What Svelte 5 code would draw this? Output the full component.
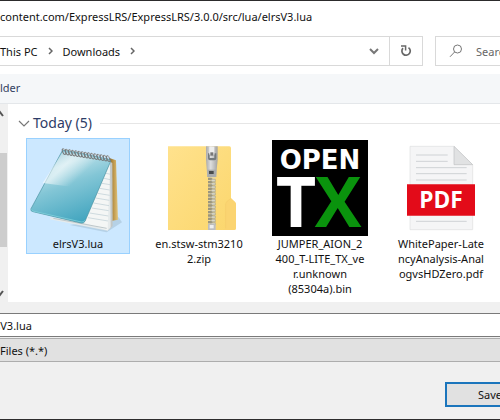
<script lang="ts">
  interface FileItem {
    icon: 'notepad' | 'zip' | 'opentx' | 'pdf';
    lines: string[];
  }

  const files: FileItem[] = [
    { icon: 'notepad', lines: ['elrsV3.lua'] },
    { icon: 'zip', lines: ['en.stsw-stm3210', '2.zip'] },
    { icon: 'opentx', lines: ['JUMPER_AION_2', '400_T-LITE_TX_ve', 'r.unknown', '(85304a).bin'] },
    { icon: 'pdf', lines: ['WhitePaper-Late', 'ncyAnalysis-Anal', 'ogvsHDZero.pdf'] }
  ];

  const rings = Array.from({ length: 15 }, (_, i) => i);
  const teeth = Array.from({ length: 14 }, (_, i) => i);

  let selected = $state(0);
  let fileName = $state('sV3.lua');
</script>

<div class="dialog">
  <header class="title">content.com/ExpressLRS/ExpressLRS/3.0.0/src/lua/elrsV3.lua</header>

  <div class="location">
    <nav class="address">
      <button class="crumb">This PC</button>
      <svg width="5" height="8" viewBox="0 0 5 8"><path d="M1 1l3 3-3 3" fill="none" stroke="#666" stroke-width="1.5" /></svg>
      <button class="crumb">Downloads</button>
      <svg width="5" height="8" viewBox="0 0 5 8"><path d="M1 1l3 3-3 3" fill="none" stroke="#666" stroke-width="1.5" /></svg>
      <button class="history" aria-label="Previous locations">
        <svg width="10" height="7" viewBox="0 0 10 7"><path d="M1 1l4 4 4-4" fill="none" stroke="#777" stroke-width="2" /></svg>
      </button>
      <button class="refresh" aria-label="Refresh">
        <svg width="12" height="12" viewBox="0 0 12 12">
          <path d="M8.500 2.600A4.200 4.200 0 1 1 3 3.200" fill="none" stroke="#686868" stroke-width="1.7" />
          <path d="M1 1h4.600v4.600" fill="none" stroke="#686868" stroke-width="1.5" />
        </svg>
      </button>
    </nav>
    <label class="search">
      <svg width="14" height="14" viewBox="0 0 14 14" fill="none" stroke="#777">
        <circle cx="8.5" cy="5" r="4" />
        <path d="M5.700 7.900L1 12.800" />
      </svg>
      <input type="search" placeholder="Search" aria-label="Search" />
    </label>
  </div>

  <div class="toolbar"><button>lder</button></div>

  <div class="browser">
    <div class="scrollbar">
      <svg width="4" height="7" viewBox="0 0 4 7"><path d="M-4 6l3.500-4.500L3 6" fill="none" stroke="#555" stroke-width="2" /></svg>
      <div class="thumb"></div>
      <svg width="4" height="7" viewBox="0 0 4 7"><path d="M-4 1l3.500 4.500L3 1" fill="none" stroke="#555" stroke-width="2" /></svg>
    </div>

    <main class="pane">
      <h2>
        <svg width="12" height="7" viewBox="0 0 12 7"><path d="M1 1l5 5 5-5" fill="none" stroke="#777" stroke-width="1.2" /></svg>
        Today (5)
      </h2>

      <div class="files">
        {#each files as file, i}
          <button class="file" class:selected={selected === i} onclick={() => (selected = i)}>
            {#if file.icon === 'notepad'}
              <svg class="icon" viewBox="30 30 288 288">
                <defs>
                  <linearGradient id="cover" x1="0.2" y1="0" x2="0.6" y2="1">
                    <stop offset="0" stop-color="#6fb5ca" />
                    <stop offset="0.25" stop-color="#b4dde7" />
                    <stop offset="0.5" stop-color="#83c6d6" />
                    <stop offset="1" stop-color="#42a5bf" />
                  </linearGradient>
                  <linearGradient id="shine" x1="0" y1="0" x2="1" y2="0.6">
                    <stop offset="0" stop-color="#fff" stop-opacity="0.1" />
                    <stop offset="0.4" stop-color="#fff" stop-opacity="0.6" />
                    <stop offset="0.7" stop-color="#fff" stop-opacity="0" />
                  </linearGradient>
                  <linearGradient id="spine">
                    <stop offset="0" stop-color="#8c6b2d" />
                    <stop offset="0.5" stop-color="#bd974b" />
                    <stop offset="1" stop-color="#e2c57d" />
                  </linearGradient>
                </defs>
                <path d="M150 285l110 22 46-30-10-15z" fill="#829cac" opacity="0.3" />
                <path d="M268 84l20 7 6 178-25 5z" fill="url(#spine)" />
                <path d="M266 92l11 7 1 189-12 12-14-25z" fill="#c2c7c6" />
                <path d="M270 95l-74 180-104-13-3 6 174 34 9-10z" fill="#e5eaeb" />
                <path d="M270 98l-7 203-71-22z" fill="#f4f6f5" />
                <path d="M258 130l14 3m-20 12l19 4m-25 11l24 4m-31 11l30 5m-36 10l36 6m-42 8l41 7m-47 8l46 8m-52 7l51 8m-57 7l56 9m-61 5l60 10" fill="none" stroke="#bacbd3" stroke-width="2" />
                <path d="M100 265l160 30" stroke="#bec7ca" stroke-width="3" />
                <path d="M126 64q2-5 8-4l133 28q6 2 4 8l-76 178q-4 7-12 5L39 245q-9-2-6-9z" fill="url(#cover)" stroke="#468f9f" stroke-width="2" />
                <path d="M128 66l138 25-38 89L68 159z" fill="url(#shine)" />
                <path d="M34 238q1 5 8 6l142 32q7 1 10-5" fill="none" stroke="#8bd9e2" stroke-width="2" />
                {#each rings as n}
                  <g transform="translate({132 + n * 9.5} {65 + n * 1.5})" fill="none">
                    <ellipse rx="4" ry="9" transform="rotate(-25)" stroke="#75797b" stroke-width="3" />
                    <path d="M-3-6q5-5 6 2" stroke="#d3d5d2" stroke-width="2" />
                  </g>
                {/each}
              </svg>
            {:else if file.icon === 'zip'}
              <svg class="icon" viewBox="3 15 288 288">
                <defs>
                  <linearGradient id="folder" x1="0" y1="0" x2="1" y2="1">
                    <stop offset="0" stop-color="#ffe28d" />
                    <stop offset="1" stop-color="#fbd66c" />
                  </linearGradient>
                  <linearGradient id="metal">
                    <stop offset="0" stop-color="#aaa" />
                    <stop offset="0.4" stop-color="#dedede" />
                    <stop offset="1" stop-color="#a2a2a2" />
                  </linearGradient>
                </defs>
                <path d="M54 34h184q5 0 5 5v151l12 11q3 3 3 8v70q0 6-6 6H54z" fill="url(#folder)" />
                <path d="M243 190l-12 8q-5 5-5 11v70q0 6-6 6h32q6 0 6-6v-70q0-5-3-8z" fill="#fbd471" />
                <path d="M227 280v-72q0-5 5-10l11-8" fill="none" stroke="#efc663" />
                <path d="M176 120h20v165h-20z" fill="#e8d7a0" />
                {#each teeth as n}
                  <g transform="translate(174 {128 + n * 10})">
                    <path d="M0 0h10l4 4-4 3H0z" fill="#9a957f" />
                    <path d="M22 5H12l-4 4 4 3h10z" fill="#d9d7c8" stroke="#777465" stroke-width="1" />
                  </g>
                {/each}
                <path d="M168 34h35v40l-5 52h-26l-4-52z" fill="url(#metal)" />
                <path d="M174 55h5v14h14V55h6v15q0 6-6 6h-13q-6 0-6-6z" fill="#747a7d" />
                <path d="M178 35h15v24h-15z" fill="#eee" />
                <path d="M181 52h9v10h-9z" fill="#777" />
                <path d="M172 104h27v22h-27z" fill="#a9acad" />
                <path d="M177 108h14v9h-14z" fill="#484b4c" />
                <path d="M174 266h23v19h-23z" fill="#bdbdbd" />
                <path d="M179 270h12v10h-12z" fill="#eee" />
              </svg>
            {:else if file.icon === 'opentx'}
              <svg class="icon" viewBox="0 0 96 96">
                <rect width="96" height="96" fill="#000" />
                <text class="open" x="48" y="29" text-anchor="middle">OPEN</text>
                <text class="tx" x="24" y="87" text-anchor="middle">T</text>
                <text class="tx green" x="66" y="87" text-anchor="middle">X</text>
              </svg>
            {:else}
              <svg class="icon" viewBox="24 15 288 288">
                <path d="M75 34h132l56 55v195H75z" fill="#f5f5f6" stroke="#dedfe0" stroke-width="2" />
                <path d="M207 34v55h56z" fill="#e1e2e3" stroke="#bfc1c2" stroke-width="2" />
                <path d="M93 60h95M93 79h95M93 98h152M93 116h152M93 135h152M93 259h152" stroke="#cfd2d5" stroke-width="3" />
                <path d="M66 148h204v94H66z" fill="#e30b19" />
                <text class="pdf" x="168" y="220" text-anchor="middle">PDF</text>
              </svg>
            {/if}
            {#each file.lines as line}
              <span>{line}</span>
            {/each}
          </button>
        {/each}
      </div>
    </main>
  </div>

  <div class="fields">
    <input type="text" aria-label="File name" bind:value={fileName} />
    <select aria-label="Save as type">
      <option>Files (*.*)</option>
    </select>
  </div>

  <footer><button>Save</button></footer>
</div>

<style>
  :global(body) {
    margin: 0;
    overflow: hidden;
  }

  .dialog {
    display: flex;
    flex-direction: column;
    box-sizing: border-box;
    min-height: 100vh;
    overflow: hidden;
    border-top: 1px solid #2c2b2c;
    border-bottom: 1px solid #2c2b2c;
    background: #f0f0f0;
    color: #111;
    font-family: 'Noto Sans', 'Open Sans', sans-serif;
    font-size: 11px;
    line-height: 15px;
  }

  svg {
    flex-shrink: 0;
  }

  button,
  input,
  select {
    box-sizing: border-box;
    margin: 0;
    padding: 0;
    border: 0;
    border-radius: 0;
    outline: none;
    background: none;
    color: inherit;
    font: inherit;
  }

  .title {
    padding: 8px 0 12px;
    background: #fff;
    white-space: nowrap;
  }

  .location {
    display: flex;
    gap: 12px;
    padding-bottom: 8px;
    background: #fff;
  }

  .address {
    display: flex;
    flex: 1;
    align-items: center;
    gap: 10px;
    height: 30px;
    box-sizing: border-box;
    border: 1px solid #d9d9d9;
    border-left: 0;
  }

  .history {
    width: 30px;
    margin-left: auto;
  }

  .refresh {
    width: 33px;
    height: 100%;
    margin-left: -10px;
    border-left: 1px solid #d9d9d9;
  }

  .history svg,
  .refresh svg {
    display: block;
    margin: auto;
  }

  .search {
    display: flex;
    align-items: center;
    gap: 13px;
    width: 65px;
    box-sizing: border-box;
    padding-left: 13px;
    overflow: hidden;
    border: 1px solid #d9d9d9;
    border-right: 0;
  }

  .search input {
    width: 60px;
    flex-shrink: 0;
  }

  .search input::placeholder {
    color: #666;
    opacity: 1;
  }

  .toolbar {
    padding: 6px 0 8px;
    border-bottom: 1px solid #e4e7ea;
    background: #f5f7f9;
    color: #33415f;
  }

  .browser {
    display: flex;
    height: 198px;
  }

  .scrollbar {
    display: flex;
    flex-direction: column;
    width: 7px;
    box-sizing: border-box;
    padding: 6px 0 5px;
    background: #f0f0f0;
  }

  .thumb {
    height: 94px;
    margin: 36px 0 auto;
    background: #cdcdcd;
  }

  .pane {
    flex: 1;
    min-width: 0;
    margin-left: 1px;
    padding-left: 10px;
    background: #fff;
  }

  h2 {
    display: flex;
    align-items: center;
    gap: 3px;
    margin: 9px 0 5px;
    color: #2e3c67;
    font-size: 14px;
    font-weight: 400;
    line-height: 20px;
  }

  h2::after {
    content: '';
    flex: 1;
    height: 1px;
    margin-left: 5px;
    background: #e6e6e6;
  }

  .files {
    display: flex;
    gap: 17px;
    padding-left: 8px;
  }

  .file {
    display: flex;
    flex-direction: column;
    flex-shrink: 0;
    align-items: center;
    align-self: flex-start;
    width: 104px;
    padding: 1px 0 2px;
    border: 1px solid transparent;
    white-space: nowrap;
  }

  .file.selected {
    border-color: #99d1ff;
    background: #cce8ff;
  }

  .icon {
    width: 96px;
    height: 96px;
  }

  .open {
    fill: #fff;
    font: bold 26px 'DejaVu Sans', sans-serif;
  }

  .tx {
    fill: #fff;
    font: bold 70px 'Open Sans', sans-serif;
  }

  .green {
    fill: #0a930d;
  }

  .pdf {
    fill: #fff;
    font: bold 68px 'Open Sans', sans-serif;
  }

  .fields {
    display: flex;
    flex-direction: column;
    gap: 1px;
    padding-top: 11px;
  }

  .fields input {
    height: 24px;
    border: 1px solid #7a7a7a;
    border-width: 1px 0;
    background: #fff;
    text-indent: -5px;
  }

  .fields select {
    appearance: none;
    height: 24px;
    border: 1px solid #adadad;
    border-width: 1px 0;
    background: #e1e1e1;
  }

  footer {
    display: flex;
    justify-content: flex-end;
    padding: 20px 0 12px;
  }

  footer button {
    width: 90px;
    height: 25px;
    flex-shrink: 0;
    margin-right: -35px;
    border: 2px solid #1b75bc;
    background: #e1e1e1;
  }
</style>
